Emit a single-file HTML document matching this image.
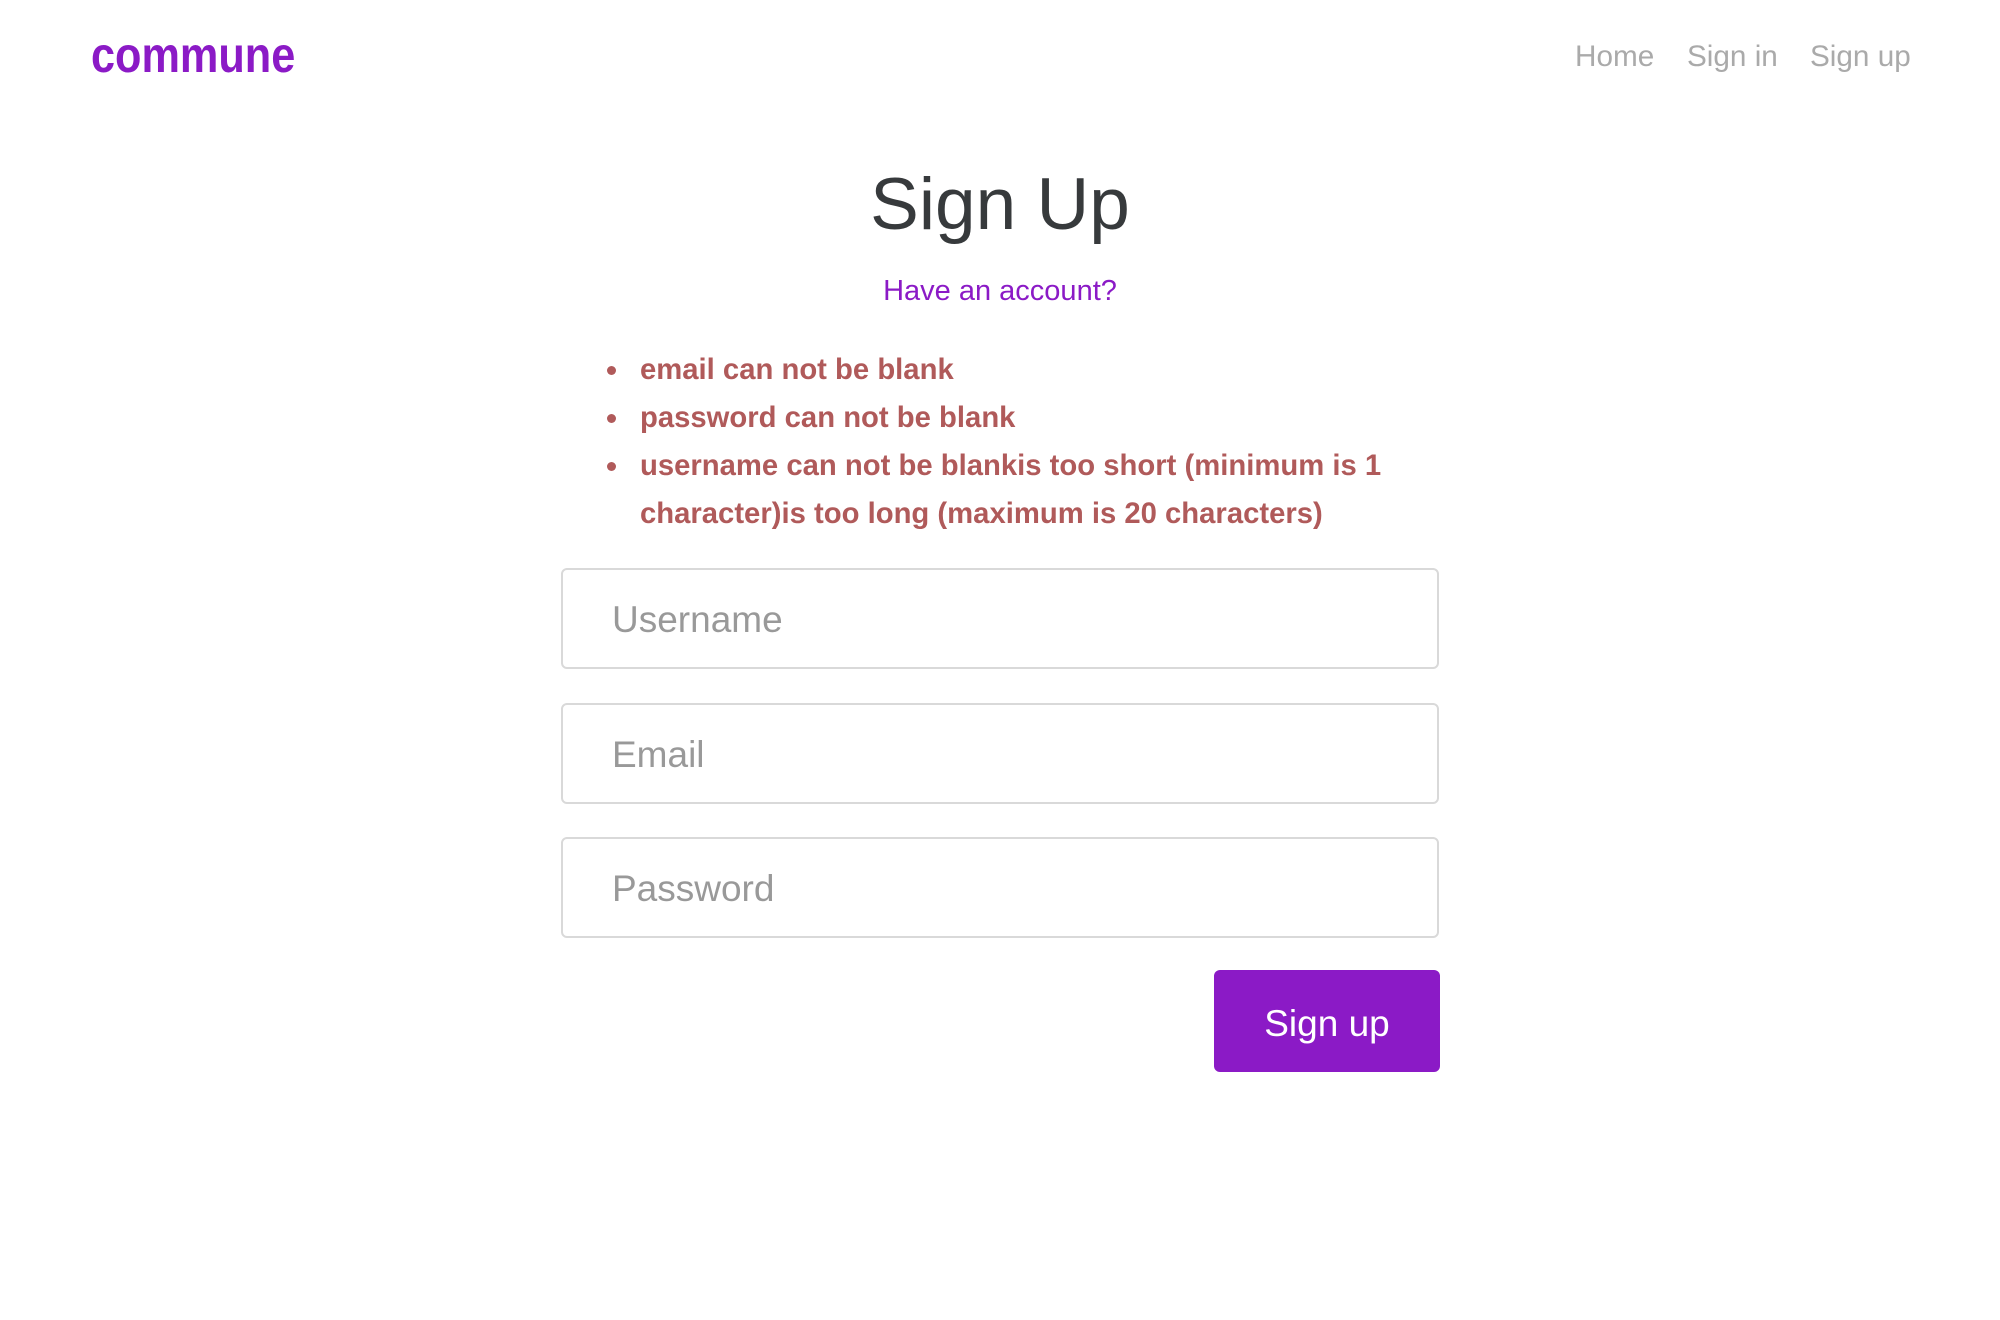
<!DOCTYPE html>
<html><head><meta charset="utf-8"><style>
body{margin:0;width:2000px;height:1320px;background:#fff;font-family:"Liberation Sans",sans-serif;position:relative;overflow:hidden}
.a{position:absolute;white-space:nowrap;line-height:1}
.logo{left:91px;top:30px;font-size:50px;font-weight:bold;color:#8b1ac6;transform:scaleX(0.865);transform-origin:left top}
.nav{top:42px;font-size:30px;color:#aaa;transform:scaleX(0.99);transform-origin:left top}
h1{position:absolute;margin:0;left:0;width:2000px;text-align:center;top:168px;font-size:73px;font-weight:normal;color:#373a3c;line-height:1}
.have{left:0;width:2000px;text-align:center;top:277px;font-size:29px;color:#8b1ac6}
.err{left:640px;font-size:30px;font-weight:bold;color:#b05a5a;transform:scaleX(0.975);transform-origin:left top}
.dot{position:absolute;left:607px;width:9px;height:9px;border-radius:50%;background:#b05a5a}
.inp{position:absolute;left:561px;width:874px;height:97px;border:2px solid #d9d9d9;border-radius:6px}
.inp span{position:absolute;left:49px;top:31px;font-size:37px;color:#999;line-height:1;transform:scaleX(1.0);transform-origin:left top}
.btn{position:absolute;left:1214px;top:970px;width:226px;height:102px;background:#8b1ac6;border-radius:6px;color:#fff;font-size:37px;text-align:center;line-height:108px}
</style></head><body>
<div class="a logo">commune</div>
<div class="a nav" style="left:1575px">Home</div>
<div class="a nav" style="left:1687px">Sign in</div>
<div class="a nav" style="left:1810px">Sign up</div>
<h1>Sign Up</h1>
<div class="a have">Have an account?</div>
<div class="dot" style="top:366px"></div><div class="a err" style="top:355px">email can not be blank</div>
<div class="dot" style="top:414px"></div><div class="a err" style="top:403px">password can not be blank</div>
<div class="dot" style="top:462px"></div><div class="a err" style="top:451px">username can not be blankis too short (minimum is 1</div>
<div class="a err" style="top:499px">character)is too long (maximum is 20 characters)</div>
<div class="inp" style="top:568px"><span>Username</span></div>
<div class="inp" style="top:703px"><span>Email</span></div>
<div class="inp" style="top:837px"><span>Password</span></div>
<div class="btn">Sign up</div>
</body></html>
